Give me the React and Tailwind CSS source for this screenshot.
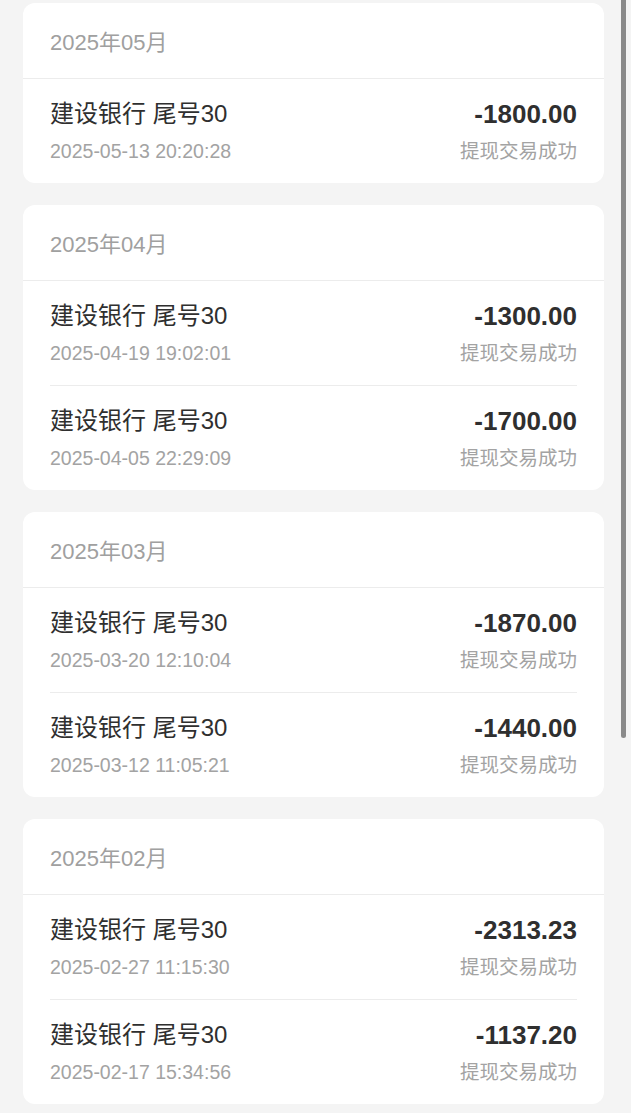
const groups = [
  {
    month: '2025年05月',
    items: [{ time: '2025-05-13 20:20:28', amount: '-1800.00' }],
  },
  {
    month: '2025年04月',
    items: [
      { time: '2025-04-19 19:02:01', amount: '-1300.00' },
      { time: '2025-04-05 22:29:09', amount: '-1700.00' },
    ],
  },
  {
    month: '2025年03月',
    items: [
      { time: '2025-03-20 12:10:04', amount: '-1870.00' },
      { time: '2025-03-12 11:05:21', amount: '-1440.00' },
    ],
  },
  {
    month: '2025年02月',
    items: [
      { time: '2025-02-27 11:15:30', amount: '-2313.23' },
      { time: '2025-02-17 15:34:56', amount: '-1137.20' },
    ],
  },
];

function Row({ time, amount }) {
  return (
    <div className="flex h-[104px] items-start justify-between px-[27px] pt-[20px]">
      <div className="flex flex-col">
        <span className="text-[24px] leading-[30px] text-[#2f2f2f]">建设银行 尾号30</span>
        <span className="mt-[9px] text-[19.5px] leading-[26px] text-[#a3a3a3]">{time}</span>
      </div>
      <div className="flex flex-col items-end">
        <span className="text-[26px] font-bold leading-[30px] text-[#2f2f2f]">{amount}</span>
        <span className="mt-[9px] text-[19.5px] leading-[26px] text-[#a3a3a3]">提现交易成功</span>
      </div>
    </div>
  );
}

export default function App() {
  return (
    <div
      className="relative min-h-screen bg-[#f4f4f4] pb-[10px] pl-[23px] pr-[27px] pt-[3px]"
      style={{ fontFamily: '"Liberation Sans", "Noto Sans CJK SC", sans-serif' }}
    >
      <div className="flex flex-col gap-[22px]">
        {groups.map((g) => (
          <div key={g.month} className="overflow-hidden rounded-[12px] bg-white">
            {/* 月份标题 */}
            <div className="flex h-[76px] items-center border-b border-[#ececec] pl-[27px] pt-[4px]">
              <span className="text-[22px] text-[#a0a0a0]">{g.month}</span>
            </div>
            {g.items.map((it, i) => (
              <div key={it.time}>
                {i > 0 && <div className="mx-[27px] h-px bg-[#ececec]" />}
                <Row {...it} />
              </div>
            ))}
          </div>
        ))}
      </div>

      {/* 滚动条 */}
      <div className="absolute right-[5px] top-0 h-[738px] w-[5px] rounded-b-full bg-[#8a8a8a]" />
    </div>
  );
}
